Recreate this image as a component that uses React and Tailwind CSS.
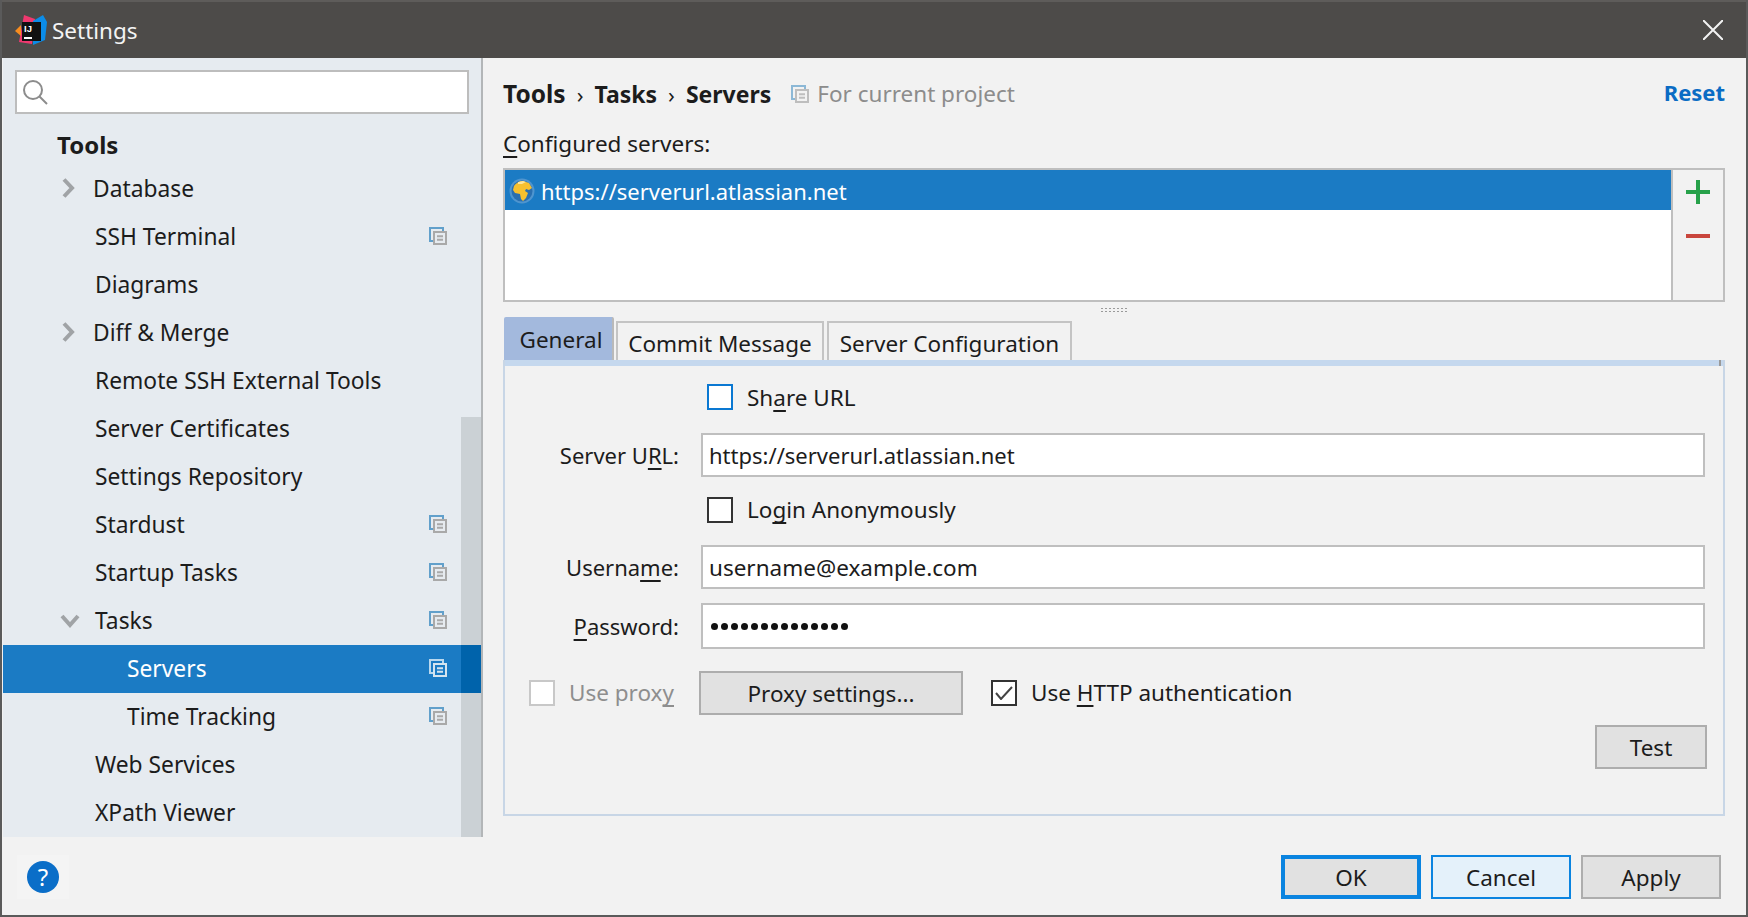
const FONT = "font-['Noto_Sans',sans-serif]";

const NAV = [
  { label: 'Database', arrow: 'right', left: 93 },
  { label: 'SSH Terminal', left: 95, shared: true },
  { label: 'Diagrams', left: 95 },
  { label: 'Diff & Merge', arrow: 'right', left: 93 },
  { label: 'Remote SSH External Tools', left: 95 },
  { label: 'Server Certificates', left: 95 },
  { label: 'Settings Repository', left: 95 },
  { label: 'Stardust', left: 95, shared: true },
  { label: 'Startup Tasks', left: 95, shared: true },
  { label: 'Tasks', arrow: 'down', left: 95, shared: true },
  { label: 'Servers', left: 127, shared: true, selected: true },
  { label: 'Time Tracking', left: 127, shared: true },
  { label: 'Web Services', left: 95 },
  { label: 'XPath Viewer', left: 95 },
];

function SharedIcon({ light, className = '' }) {
  const back = light ? '#b9d8ee' : '#62a0cb';
  const front = light ? '#d5e4ef' : '#a9a9a9';
  return (
    <svg width="18" height="18" viewBox="0 0 18 18" fill="none" className={className}>
      <path d="M4 14H1V1h13v3" stroke={back} strokeWidth="2" />
      <rect x="5" y="5" width="12" height="12" stroke={front} strokeWidth="2" />
      <path d="M8 9.2h6M8 12.8h6" stroke={front} strokeWidth="2" />
    </svg>
  );
}

function Chevron({ dir }) {
  if (dir === 'down') {
    return (
      <svg width="20" height="14" viewBox="0 0 20 14" fill="none" className="absolute left-[57px] top-[17px]">
        <path d="M2 2l8 9 8-9" stroke="#a0a3a6" strokeWidth="4" />
      </svg>
    );
  }
  return (
    <svg width="14" height="20" viewBox="0 0 14 20" fill="none" className="absolute left-[59px] top-[13px]">
      <path d="M2 1.500l8 8.500-8 8.500" stroke="#a0a3a6" strokeWidth="4" />
    </svg>
  );
}

function NavRow({ item }) {
  return (
    <div
      className={`relative flex h-[48px] items-center ${
        item.selected ? 'bg-[#1b7bc4] text-white' : 'text-[#1c1c1c]'
      }`}
      style={{ paddingLeft: item.left - 3 }}
    >
      {item.arrow && <Chevron dir={item.arrow} />}
      <span>{item.label}</span>
      {item.selected && <div className="absolute inset-y-0 right-0 z-10 w-[20px] bg-[#0063ab]" />}
      {item.shared && <SharedIcon light={item.selected} className="absolute left-[426px] top-[14px] z-20" />}
    </div>
  );
}

function Logo() {
  return (
    <svg width="32" height="32" viewBox="0 0 32 32" className="shrink-0">
      <path d="M9 1l11 4-3 25-13-2z" fill="#f0386f" />
      <path d="M0 17l6-6v11z" fill="#f78c1f" />
      <path d="M18 7L28 1l4 7-2 18-12 5z" fill="#0b8ce8" />
      <rect x="7" y="8" width="19" height="19" fill="#111" />
      <rect x="9" y="23" width="8" height="2" fill="#fff" />
      <text x="9" y="18" fill="#fff" fontSize="9.500" fontWeight="700" fontFamily="Liberation Sans, sans-serif">IJ</text>
    </svg>
  );
}

function Globe() {
  return (
    <svg width="26" height="26" viewBox="0 0 26 26" className="shrink-0">
      <circle cx="13" cy="13" r="12.500" fill="#4f95cf" />
      <circle cx="13" cy="13" r="10.500" fill="#2a6fb0" />
      <path d="M5 8c2-3 5-5 9-5l6 2 3 5-3 2-3-1-1 2 3 2-2 5-3 3-2-2-1-5-5-1-2-3z" fill="#f7c02e" />
      <path d="M9 4l5-1 3 1-4 2-4 0z" fill="#ffe59a" />
    </svg>
  );
}

// mnemonic letter, Windows-style underline
function U({ children }) {
  return (
    <span className="underline decoration-2 underline-offset-[4px] [text-decoration-skip-ink:none]">{children}</span>
  );
}

function Checkbox({ color = 'border-[#333333]', checked }) {
  return (
    <span className={`flex h-[26px] w-[26px] shrink-0 items-center justify-center border-2 bg-white ${color}`}>
      {checked && (
        <svg width="18" height="14" viewBox="0 0 18 14" fill="none">
          <path d="M1 7l5 6L17 1" stroke="#444" strokeWidth="2" />
        </svg>
      )}
    </span>
  );
}

function Field({ label, children, className = '' }) {
  return (
    <div className={`flex items-center ${className}`}>
      <div className="w-[175px] pr-[1px] text-right text-[22px]">{label}</div>
      <div className="ml-[21px] flex h-full w-[1004px] items-center border-2 border-[#bfbfbf] bg-white pl-[6px]">
        {children}
      </div>
    </div>
  );
}

function Btn({ children, className = '' }) {
  return <div className={`flex h-[44px] items-center justify-center pt-[2px] ${className}`}>{children}</div>;
}

export default function App() {
  return (
    <div className={`${FONT} flex h-[917px] w-[1748px] flex-col overflow-hidden border-x-2 border-b-2 border-[#5a5a5a] bg-[#f2f2f2] text-[22.500px] text-[#1c1c1c]`}>
      <div className="flex h-[58px] shrink-0 items-center border-t-2 border-t-[#5e5c5a] bg-[#4d4b49] pl-[13px] text-white">
        <Logo />
        <span className="ml-[5px] pt-[2px] text-[22.500px] text-[#f4f4f4]">Settings</span>
        <svg width="20" height="20" viewBox="0 0 20 20" className="ml-auto mr-[23px]" fill="none">
          <path d="M0 0l20 20M20 0L0 20" stroke="#f2f2f2" strokeWidth="2" />
        </svg>
      </div>

      <div className="flex min-h-0 flex-1">
        <aside className="relative ml-px flex w-[480px] shrink-0 flex-col border-r-2 border-[#b3b6b8] bg-[#e6ebf0] text-[22.800px]">
          <div className="mx-[12px] mt-[12px] flex h-[44px] shrink-0 items-center border-2 border-[#bdbdbd] bg-white pl-[5px]">
            <svg width="26" height="26" viewBox="0 0 26 26" fill="none">
              <circle cx="11" cy="11" r="9" stroke="#8c8c8c" strokeWidth="2" />
              <path d="M17.500 17.500L25 25" stroke="#8c8c8c" strokeWidth="2" />
            </svg>
          </div>
          <div className="flex h-[51px] shrink-0 items-end pb-[3px] pl-[54px] text-[24px] font-bold leading-[34px]">Tools</div>
          <div>
            {NAV.map((item) => (
              <NavRow key={item.label} item={item} />
            ))}
          </div>
          {/* overlay scrollbar */}
          <div className="absolute bottom-0 right-0 top-[359px] w-[20px] bg-[#cbd1d5]" />
        </aside>

        <main className="flex min-w-0 flex-1 flex-col pl-[20px] pr-[21px]">
          <div className="mt-[16px] flex h-[40px] shrink-0 items-center">
            <b className="text-[24.500px] font-bold">Tools</b>
            <span className="mx-[11px] text-[22px]">›</span>
            <b className="text-[23px] font-bold">Tasks</b>
            <span className="mx-[11px] text-[22px]">›</span>
            <b className="text-[23px] font-bold">Servers</b>
            <SharedIcon className="ml-[20px] opacity-70" />
            <span className="ml-[8px] text-[#8c8c8c]">For current project</span>
            <span className="ml-auto pb-[4px] text-[22px] font-bold text-[#0a6cc4]">Reset</span>
          </div>
          <div className="mt-[10px] flex h-[40px] shrink-0 items-center"><span><U>C</U>onfigured servers:</span></div>

          <div className="mt-[4px] flex h-[134px] shrink-0 border-2 border-[#bfbfbf] bg-white">
            <div className="flex-1">
              <div className="flex h-[40px] items-center bg-[#1b7bc4] pl-[4px] pt-[2px] text-[22px] text-white">
                <Globe />
                <span className="ml-[6px]">https://serverurl.atlassian.net</span>
              </div>
            </div>
            <div className="flex w-[52px] flex-col items-center border-l-2 border-[#bfbfbf] bg-[#f2f2f2] pt-[10px]">
              <svg width="24" height="24" viewBox="0 0 24 24"><path d="M10 0h4v10h10v4H14v10h-4V14H0v-4h10z" fill="#27a14a" /></svg>
              <div className="mt-[30px] h-[4px] w-[24px] bg-[#c9463d]" />
            </div>
          </div>

          <div className="flex h-[15px] shrink-0 items-center justify-center">
            <div className="ml-[-1px] h-[5px] w-[28px] bg-[radial-gradient(#9a9a9a_1px,transparent_1.2px)] bg-[length:4px_3px]" />
          </div>

          {/* tab strip */}
          <div className="flex h-[43px] shrink-0 items-end whitespace-nowrap">
            <div className="ml-[1px] flex h-[43px] w-[110px] items-center justify-center rounded-t-[2px] border-r-2 border-[#b9b9b9] bg-[#a3b9dd] pl-[6px] pt-[2px]">General</div>
            <div className="ml-[2px] flex h-[39px] w-[208px] items-center justify-center border-x-2 border-t-2 border-[#c4c4c4] pt-[4px]">Commit Message</div>
            <div className="ml-[3px] flex h-[39px] w-[245px] items-center justify-center border-x-2 border-t-2 border-[#c4c4c4] pt-[4px]">Server Configuration</div>
          </div>

          <div className="flex h-[456px] shrink-0 flex-col border-x-2 border-b-2 border-[#c8d6e6]">
            <div className="relative h-[6px] shrink-0 bg-[#c5d8ee]">
              <div className="absolute right-[2px] top-0 h-[6px] w-[2px] bg-[#9a9a9a]" />
            </div>
            <div className="ml-[202px] mt-[18px] flex h-[26px] items-center">
              <Checkbox color="border-[#0a78d2]" />
              <span className="ml-[14px] pt-[2px]">Sh<U>a</U>re URL</span>
            </div>
            <Field className="mt-[23px] h-[44px]" label={<>Server U<U>R</U>L:</>}>
              <span className="text-[22px]">https://serverurl.atlassian.net</span>
            </Field>
            <div className="ml-[202px] mt-[20px] flex h-[26px] items-center">
              <Checkbox />
              <span className="ml-[14px]">Lo<U>g</U>in Anonymously</span>
            </div>
            <Field className="mt-[22px] h-[44px]" label={<>Userna<U>m</U>e:</>}>
              <span className="pt-[2px]">username@example.com</span>
            </Field>
            <Field className="mt-[14px] h-[46px]" label={<><U>P</U>assword:</>}>
              <span className="ml-[2px] flex gap-[3px]">
                {Array.from({ length: 14 }, (_, i) => (
                  <span key={i} className="h-[7px] w-[7px] rounded-full bg-[#111]" />
                ))}
              </span>
            </Field>
            <div className="mt-[22px] flex h-[44px] items-center">
              <div className="ml-[24px]">
                <Checkbox color="border-[#c8c8c8]" />
              </div>
              <span className="ml-[14px] w-[130px] text-[#8e8e8e]">Use prox<U>y</U></span>
              <Btn className="w-[264px] border-2 border-[#adadad] bg-[#e1e1e1]">Proxy settings...</Btn>
              <div className="ml-[28px]">
                <Checkbox checked />
              </div>
              <span className="ml-[14px]">Use <U>H</U>TTP authentication</span>
            </div>
            <div className="mt-[10px] flex justify-end pr-[16px]">
              <Btn className="w-[112px] border-2 border-[#adadad] bg-[#e1e1e1]">Test</Btn>
            </div>
          </div>
        </main>
      </div>

      <div className="flex h-[78px] shrink-0 items-start pt-[18px]">
        <div className="ml-[15px] flex h-[44px] w-[52px] items-center justify-center bg-[#f4f4f4]">
          <div className="flex h-[32px] w-[32px] items-center justify-center rounded-full bg-[#0a6ec8] text-[24px] text-white">?</div>
        </div>
        <div className="ml-auto mr-[25px] flex gap-[10px]">
          <Btn className="w-[140px] border-4 border-[#0a84e0] bg-[#e1e1e1]">OK</Btn>
          <Btn className="w-[140px] border-2 border-[#0a84e0] bg-[#e4f1fa]">Cancel</Btn>
          <Btn className="w-[140px] border-2 border-[#adadad] bg-[#e1e1e1]">Apply</Btn>
        </div>
      </div>
    </div>
  );
}
